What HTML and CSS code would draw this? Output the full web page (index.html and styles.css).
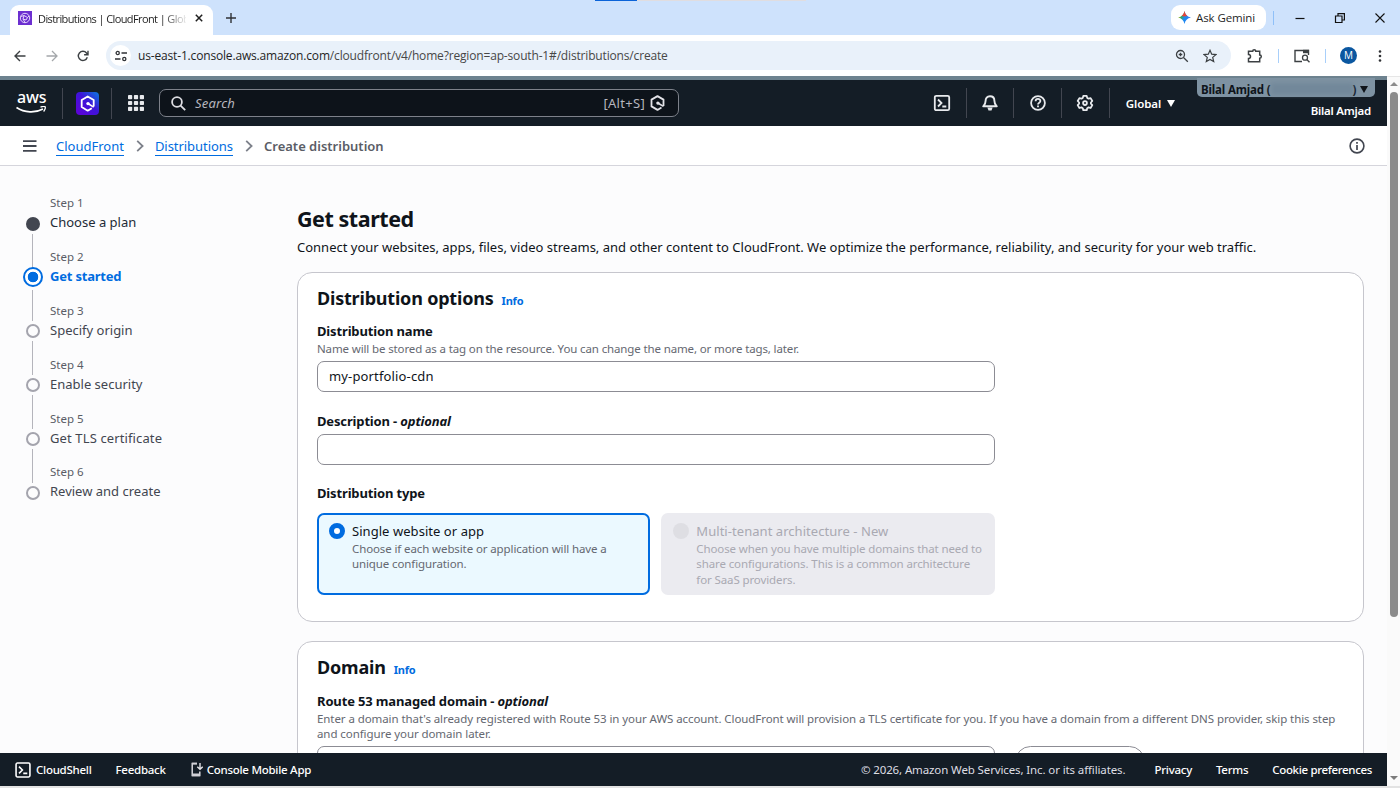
FILE: index.html
```html
<!DOCTYPE html>
<html lang="en">
<head>
    <meta charset="utf-8">
    <title>Distributions | CloudFront | Global</title>
    <link rel="stylesheet" href="styles.css">
</head>
<body>
    <!-- Browser tabs -->
    <div class="tab-strip">
        <div class="tab">
            <svg class="favicon" viewBox="0 0 14 14"><rect width="14" height="14" fill="#6c2fd0"/><g fill="none" stroke="#e3d3fb" stroke-width="1"><circle cx="7" cy="7" r="4.7"/><path d="M3 5.5l3-1 3.5 2L11 5M6 4.500L5 8l2 3.500M9.500 6.500L8 9l-3-1"/></g></svg>
            <span class="tab-title">Distributions | CloudFront | Glob</span>
            <svg class="tab-close" viewBox="0 0 10 10"><path d="M1.800 1.800l6.400 6.400M8.200 1.800L1.800 8.200" stroke="#1f1f1f" stroke-width="1.500"/></svg>
        </div>
        <svg class="tab-new" viewBox="0 0 12 12"><path d="M6 1v10M1 6h10" stroke="#303236" stroke-width="1.400"/></svg>
        <div class="loading-bar"><div class="loading-done"></div></div>
        <div class="gemini">
            <svg width="13" height="13" viewBox="0 0 14 14"><defs><linearGradient id="gem" x1="0" y1="0.300" x2="1" y2="0.700"><stop offset="0" stop-color="#fbbc04"/><stop offset="0.250" stop-color="#34a853"/><stop offset="0.500" stop-color="#1a8cf0"/><stop offset="1" stop-color="#3477f6"/></linearGradient></defs><path d="M7 0c.8 4 3 6.200 7 7-4 .8-6.200 3-7 7-.8-4-3-6.200-7-7 4-.8 6.200-3 7-7z" fill="url(#gem)"/><path d="M7 0c.5 2.500 1.500 4.200 3 5.400L7 6 4 5.400C5.500 4.200 6.500 2.500 7 0z" fill="#ea4335"/></svg>
            <span>Ask Gemini</span>
        </div>
        <div class="strip-divider"></div>
        <svg class="win-btn" viewBox="0 0 12 12"><path d="M1.500 6.500h9" stroke="#111" stroke-width="1.200"/></svg>
        <svg class="win-btn" viewBox="0 0 12 12"><path d="M1.500 4h6.500v6.500H1.500zM4 4V1.600h6.400V8H8" fill="none" stroke="#111" stroke-width="1.200"/></svg>
        <svg class="win-btn" viewBox="0 0 12 12"><path d="M1.500 1.500l9 9M10.500 1.500l-9 9" stroke="#111" stroke-width="1.100"/></svg>
    </div>

    <!-- Address bar -->
    <div class="toolbar">
        <svg class="tb-icon back" viewBox="0 0 12 12"><path d="M11.500 6H1.200M6 1L1 6l5 5" fill="none" stroke="#3c4043" stroke-width="1.400"/></svg>
        <svg class="tb-icon forward" viewBox="0 0 12 12"><path d="M.5 6h10.300M6 1l5 5-5 5" fill="none" stroke="#a4a7aa" stroke-width="1.300"/></svg>
        <svg class="tb-icon reload" viewBox="0 0 12 12"><path d="M10.300 7.300A4.600 4.600 0 1 1 9.500 3L11 4.600M11 .8v3.900H7.100" fill="none" stroke="#3c4043" stroke-width="1.400"/></svg>
        <div class="omnibox">
            <div class="site-info">
                <svg width="12" height="12" viewBox="0 0 12 12"><g fill="none" stroke="#303236" stroke-width="1.300"><circle cx="2.700" cy="3" r="1.600"/><path d="M6.500 3H12M0 9h5.500"/><circle cx="9.300" cy="9" r="1.600"/></g></svg>
            </div>
            <span class="url">us-east-1.console.aws.amazon.com<span class="url-path">/cloudfront/v4/home?region=ap-south-1#/distributions/create</span></span>
            <svg class="omni-icon zoom" viewBox="0 0 14 14"><g fill="none" stroke="#3c4043" stroke-width="1.300"><circle cx="5.500" cy="5.500" r="4"/><path d="M8.500 8.500l4.300 4.300M3.700 5.500h3.600M5.500 3.700v3.600"/></g></svg>
            <svg class="omni-icon" viewBox="0 0 14 14"><path d="M7 1.300l1.700 3.900 4.200.4-3.200 2.800 1 4.200L7 10.400l-3.700 2.200 1-4.200L1.100 5.600l4.200-.4z" fill="none" stroke="#3c4043" stroke-width="1.200"/></svg>
        </div>
        <svg class="extensions" viewBox="0 0 16 16"><path d="M1.500 3.200h4.200a1.500 1.500 0 0 1 3 0h4V7a1.600 1.600 0 0 1 0 3.200v3.600H1.500v-3.300a2 2 0 0 0 0-4z" fill="none" stroke="#3c4043" stroke-width="1.500"/></svg>
        <div class="tb-divider"></div>
        <svg class="reader" viewBox="0 0 16 14"><path d="M8 12.500H1V1.500h13.500V6" fill="none" stroke="#3c4043" stroke-width="1.400"/><path d="M9 .8h6v3.400H9z" fill="#3c4043"/><circle cx="11" cy="8.700" r="2.500" fill="none" stroke="#3c4043" stroke-width="1.300"/><path d="M12.800 10.500l2.700 2.700" stroke="#3c4043" stroke-width="1.400"/></svg>
        <div class="tb-divider"></div>
        <div class="avatar">M</div>
        <svg class="kebab" viewBox="0 0 4 14"><g fill="#303236"><circle cx="2" cy="2.500" r="1.300"/><circle cx="2" cy="7" r="1.300"/><circle cx="2" cy="11.500" r="1.300"/></g></svg>
    </div>

    <div class="viewport">
        <div class="page">
            <!-- Console navigation -->
            <header class="nav">
                <div class="aws-logo">
                    <span>aws</span>
                    <svg width="31" height="8" viewBox="0 0 31 8"><path d="M.5 1.500c8 5.500 19 5.600 26.500 1.500" fill="none" stroke="#fff" stroke-width="1.600"/><path d="M24.500 1.200c2-.9 4.300-.8 4.700-.3.400.6-.2 3-1.600 4.600" fill="none" stroke="#fff" stroke-width="1.300"/></svg>
                </div>
                <div class="nav-divider d1"></div>
                <svg class="q-logo" viewBox="0 0 23 23"><defs><linearGradient id="q" x1="0" y1="1" x2="1" y2="0"><stop offset="0" stop-color="#6200d8"/><stop offset="0.550" stop-color="#3d14d8"/><stop offset="1" stop-color="#0b7be0"/></linearGradient></defs><rect width="23" height="23" rx="4" fill="url(#q)"/><path d="M15.800 16.200l-4.100 2.500-6-3.600V8.100l6-3.600 6 3.600v6.400" fill="none" stroke="#fff" stroke-width="1.800" stroke-linejoin="round"/><path d="M11.900 11.500l5.800 3.600" stroke="#fff" stroke-width="1.600"/><circle cx="12" cy="11.600" r="1.700" fill="#fff"/></svg>
                <div class="nav-divider d2"></div>
                <svg class="apps" viewBox="0 0 16 16"><g fill="#e8eaed"><rect width="4.200" height="4.200" rx=".8"/><rect x="5.900" width="4.200" height="4.200" rx=".8"/><rect x="11.800" width="4.200" height="4.200" rx=".8"/><rect y="5.900" width="4.200" height="4.200" rx=".8"/><rect x="5.900" y="5.900" width="4.200" height="4.200" rx=".8"/><rect x="11.800" y="5.900" width="4.200" height="4.200" rx=".8"/><rect y="11.800" width="4.200" height="4.200" rx=".8"/><rect x="5.900" y="11.800" width="4.200" height="4.200" rx=".8"/><rect x="11.800" y="11.800" width="4.200" height="4.200" rx=".8"/></g></svg>
                <div class="search">
                    <svg width="15" height="15" viewBox="0 0 15 15"><g fill="none" stroke="#dedee3" stroke-width="1.800"><circle cx="6" cy="6" r="4.900"/><path d="M9.600 9.600l4.600 4.600"/></g></svg>
                    <span class="search-placeholder">Search</span>
                    <span class="search-key">[Alt+S]</span>
                    <svg width="15" height="16" viewBox="0 0 15 16"><path d="M11.500 12.500l-4 2.400-6-3.500V4.600l6-3.500 6 3.500v6.300" fill="none" stroke="#e3e3e8" stroke-width="1.800" stroke-linejoin="round"/><path d="M7.800 8l5.700 3.400" stroke="#e3e3e8" stroke-width="1.600"/><circle cx="7.900" cy="8.100" r="1.700" fill="#e3e3e8"/></svg>
                </div>
                <div class="nav-tools">
                    <div class="tool"><svg width="18" height="18" viewBox="0 0 18 18"><g fill="none" stroke="#e8eaed" stroke-width="1.800"><rect x="1.800" y="1.800" width="14.400" height="14.400" rx="1.500"/><path d="M5 5.500L8.500 9 5 12.500M9.300 12.500h4"/></g></svg></div>
                    <div class="tool"><svg width="18" height="18" viewBox="0 0 18 18"><path d="M9 2.300c-3 0-4.400 2-4.400 4.500 0 3-.9 3.700-2.400 5.500h13.600c-1.500-1.800-2.400-2.500-2.400-5.500 0-2.500-1.400-4.500-4.400-4.500z" fill="none" stroke="#e8eaed" stroke-width="1.900" stroke-linejoin="round"/><path d="M6.400 13.500h5.200L10.500 16.500h-3z" fill="#e8eaed"/></svg></div>
                    <div class="tool"><svg width="18" height="18" viewBox="0 0 18 18"><g fill="none" stroke="#e8eaed" stroke-width="1.800"><circle cx="9" cy="9" r="6.900"/><path d="M6.600 7.200c0-3 4.800-3 4.800-.2 0 1.800-2.400 1.600-2.400 3.500M9 11.600v1.700"/></g></svg></div>
                    <div class="tool"><svg width="18" height="18" viewBox="0 0 18 18"><g fill="none" stroke="#e8eaed" stroke-width="1.800" stroke-linejoin="round"><path d="M7.300 1.900h3.400l.5 2 1.400.8 2-.6 1.700 2.900L14.900 8.500v1.200l1.400 1.400-1.700 2.900-2-.6-1.400.8-.5 2H7.300l-.5-2-1.400-.8-2 .6-1.700-2.900 1.400-1.400V8.500L1.700 7l1.700-2.900 2 .6 1.400-.8z"/><circle cx="9" cy="9.100" r="1.900"/></g></svg></div>
                    <div class="region">Global<i class="caret"></i></div>
                </div>
                <div class="account">
                    <div class="account-badge">Bilal Amjad (<span class="redacted"></span>)<i class="caret"></i></div>
                    <div class="account-user">Bilal Amjad</div>
                </div>
            </header>

            <nav class="breadcrumbs">
                <svg class="menu" viewBox="0 0 14 14"><path d="M0 2.200h13.500M0 7h13.500M0 11.800h13.500" stroke="#424650" stroke-width="1.800"/></svg>
                <a class="crumb crumb-service">CloudFront</a>
                <svg class="chevron" viewBox="0 0 8 12"><path d="M1.200.8L6.600 6l-5.400 5.200" fill="none" stroke="#7d818a" stroke-width="1.800"/></svg>
                <a class="crumb crumb-list">Distributions</a>
                <svg class="chevron" viewBox="0 0 8 12"><path d="M1.200.8L6.600 6l-5.400 5.200" fill="none" stroke="#7d818a" stroke-width="1.800"/></svg>
                <span class="crumb-current">Create distribution</span>
                <svg class="info-icon" viewBox="0 0 16 16"><circle cx="8" cy="8" r="6.900" fill="none" stroke="#424650" stroke-width="1.600"/><path d="M8 4v1.700M8 7v5" stroke="#424650" stroke-width="1.700"/></svg>
            </nav>

            <div class="content">
                <ol class="steps">
                    <li class="step visited">
                        <div class="marker"><span class="dot"></span></div>
                        <div class="step-text"><small>Step 1</small><span>Choose a plan</span></div>
                    </li>
                    <li class="step active">
                        <div class="marker"><span class="dot"></span></div>
                        <div class="step-text"><small>Step 2</small><span>Get started</span></div>
                    </li>
                    <li class="step">
                        <div class="marker"><span class="dot"></span></div>
                        <div class="step-text"><small>Step 3</small><span>Specify origin</span></div>
                    </li>
                    <li class="step">
                        <div class="marker"><span class="dot"></span></div>
                        <div class="step-text"><small>Step 4</small><span>Enable security</span></div>
                    </li>
                    <li class="step">
                        <div class="marker"><span class="dot"></span></div>
                        <div class="step-text"><small>Step 5</small><span class="step-tls">Get TLS certificate</span></div>
                    </li>
                    <li class="step">
                        <div class="marker"><span class="dot"></span></div>
                        <div class="step-text"><small>Step 6</small><span>Review and create</span></div>
                    </li>
                </ol>

                <main class="main">
                    <h1>Get started</h1>
                    <p class="lead">Connect your websites, apps, files, video streams, and other content to CloudFront. We optimize the performance, reliability, and security for your web traffic.</p>

                    <section class="card">
                        <div class="card-header"><h2>Distribution options</h2><a class="info">Info</a></div>
                        <label class="label" for="name">Distribution name</label>
                        <p class="hint hint-name">Name will be stored as a tag on the resource. You can change the name, or more tags, later.</p>
                        <input class="input" type="text" id="name" value="my-portfolio-cdn">
                        <label class="label label-description" for="description">Description - <em>optional</em></label>
                        <input class="input input-description" type="text" id="description">
                        <div class="label label-type">Distribution type</div>
                        <div class="tiles">
                            <div class="tile selected">
                                <span class="radio"></span>
                                <div>
                                    <div class="tile-title">Single website or app</div>
                                    <p class="tile-text">Choose if each website or application will have a<br>unique configuration.</p>
                                </div>
                            </div>
                            <div class="tile disabled">
                                <span class="radio"></span>
                                <div>
                                    <div class="tile-title">Multi-tenant architecture - New</div>
                                    <p class="tile-text">Choose when you have multiple domains that need to<br>share configurations. This is a common architecture<br>for SaaS providers.</p>
                                </div>
                            </div>
                        </div>
                    </section>

                    <section class="card card-domain">
                        <div class="card-header"><h2>Domain</h2><a class="info">Info</a></div>
                        <label class="label label-route" for="domain">Route 53 managed domain - <em>optional</em></label>
                        <p class="hint">Enter a domain that's already registered with Route 53 in your AWS account. CloudFront will provision a TLS certificate for you. If you have a domain from a different DNS provider, skip this step<br>and configure your domain later.</p>
                        <div class="domain-row">
                            <input class="input" type="text" id="domain">
                            <button class="btn" type="button"></button>
                        </div>
                    </section>
                </main>
            </div>

            <footer class="footer">
                <svg width="16" height="16" viewBox="0 0 18 18"><g fill="none" stroke="#fff" stroke-width="1.800"><rect x="1.200" y="1.200" width="15.600" height="15.600" rx="1.500"/><path d="M4.500 5.200L8.300 9l-3.800 3.800M9.300 12.800h4.500"/></g></svg>
                <span class="f-shell">CloudShell</span>
                <span class="f-feedback">Feedback</span>
                <svg class="mobile" width="12" height="15" viewBox="0 0 12 15"><path d="M6 1.500H1.200v12h7.600V9.500" fill="none" stroke="#e3e3e8" stroke-width="1.400"/><path d="M1 11.500h8v2.800H1zM1 .8h5v1.600H1z" fill="#d0d0d6"/><path d="M9 1v6M6.300 4.700L9 7.300l2.700-2.600" fill="none" stroke="#e3e3e8" stroke-width="1.400"/></svg>
                <span class="f-mobile">Console Mobile App</span>
                <span class="f-copy">© 2026, Amazon Web Services, Inc. or its affiliates.</span>
                <span class="f-privacy">Privacy</span>
                <span class="f-terms">Terms</span>
                <span class="f-cookie">Cookie preferences</span>
            </footer>
        </div>
        <div class="scrollbar">
            <i class="arrow-up"></i>
            <div class="thumb"></div>
            <i class="arrow-down"></i>
        </div>
    </div>
    <div class="bottom-edge"></div>
</body>
</html>
```
FILE: styles.css
```css
* {
    box-sizing: border-box;
}

body {
    margin: 0;
    width: 1400px;
    height: 788px;
    overflow: hidden;
    display: flex;
    flex-direction: column;
    font-family: "Noto Sans", "Open Sans", sans-serif;
    font-size: 13px;
    color: #0f141a;
    background-color: #fff;
}

svg {
    display: block;
    flex: none;
}

h1, h2, p, ol {
    margin: 0;
    padding: 0;
}

/* Browser window */
.tab-strip {
    position: relative;
    flex: none;
    height: 35px;
    display: flex;
    align-items: center;
    background-color: #cee2fc;
    font-family: "Open Sans", sans-serif;
}

.tab {
    align-self: flex-end;
    display: flex;
    align-items: center;
    width: 203px;
    height: 30px;
    margin-left: 10px;
    padding: 0 8px 4px 8px;
    border-radius: 9px 9px 0 0;
    background-color: #fff;
}

.favicon {
    width: 14px;
    height: 14px;
}

.tab-title {
    width: 148px;
    margin-left: 6px;
    white-space: nowrap;
    font-size: 11px;
    letter-spacing: -0.6px;
    color: #1f1f1f;
    -webkit-mask-image: linear-gradient(to right, #000 125px, transparent 150px);
    mask-image: linear-gradient(to right, #000 125px, transparent 150px);
}

.tab-close {
    width: 10px;
    height: 10px;
    margin-left: 8px;
}

.tab-new {
    width: 12px;
    height: 12px;
    margin-left: 12px;
}

.loading-bar {
    position: absolute;
    top: 0;
    left: 595px;
    width: 211px;
    height: 1px;
    background-color: #e0dde0;
}

.loading-done {
    width: 42px;
    height: 1px;
    background-color: #0b63d8;
}

.gemini {
    display: flex;
    align-items: center;
    gap: 5px;
    width: 95px;
    height: 25px;
    margin-left: auto;
    padding-left: 7px;
    border-radius: 9px;
    background-color: #fff;
    font-size: 11.5px;
    font-weight: 500;
    letter-spacing: -0.1px;
    color: #1f1f1f;
}

.strip-divider {
    width: 1px;
    height: 14px;
    margin: 0 20px 0 7px;
    background-color: #8fc0f8;
}

.win-btn {
    width: 12px;
    height: 12px;
    margin-right: 28px;
}

.win-btn:last-child {
    margin-right: 14px;
}

.toolbar {
    flex: none;
    height: 41px;
    display: flex;
    align-items: center;
    background-color: #fff;
    font-family: "Open Sans", sans-serif;
}

.tb-icon {
    width: 12px;
    height: 12px;
}

.back {
    margin-left: 14px;
}

.forward {
    margin-left: 20px;
}

.reload {
    margin-left: 19px;
}

.omnibox {
    display: flex;
    align-items: center;
    width: 1125px;
    height: 29px;
    margin-left: 17px;
    padding: 0 14px 0 4px;
    border-radius: 15px;
    background-color: #e9f1fa;
}

.site-info {
    display: flex;
    align-items: center;
    justify-content: center;
    width: 21px;
    height: 21px;
    border-radius: 50%;
    background-color: #fff;
}

.url {
    margin-left: 7px;
    font-size: 12px;
    letter-spacing: -0.165px;
    color: #1f1f1f;
}

.url-path {
    color: #474747;
}

.omni-icon {
    width: 14px;
    height: 14px;
}

.zoom {
    margin-left: auto;
    margin-right: 14px;
}

.extensions {
    width: 16px;
    height: 16px;
    margin-left: 16px;
}

.tb-divider {
    width: 1px;
    height: 14px;
    margin: 0 15px 0 15px;
    background-color: #a8cffa;
}

.reader {
    width: 16px;
    height: 14px;
}

.avatar {
    width: 17px;
    height: 17px;
    margin-right: 21px;
    margin-left: -1px;
    border-radius: 50%;
    background-color: #0b57a0;
    color: #fff;
    font-size: 10px;
    line-height: 17px;
    text-align: center;
}

.kebab {
    width: 4px;
    height: 14px;
}

.viewport {
    flex: 1;
    min-height: 0;
    display: flex;
}

.page {
    width: 1387px;
    display: flex;
    flex-direction: column;
    background-color: #fcfcfd;
}

.scrollbar {
    width: 13px;
    display: flex;
    flex-direction: column;
    align-items: center;
    padding: 5px 0 6px;
    border-top: 1px solid #e6e6e6;
    background-color: #fafafa;
}

.arrow-up {
    border: 4px solid transparent;
    border-top: 0;
    border-bottom: 4px solid #8b8b8b;
}

.arrow-down {
    margin-top: auto;
    border: 4px solid transparent;
    border-bottom: 0;
    border-top: 4px solid #7b7b7b;
}

.thumb {
    width: 8px;
    height: 525px;
    margin-top: 6px;
    border-radius: 4px;
    background-color: #8b8b8b;
}

.bottom-edge {
    flex: none;
    height: 2px;
    background-color: #e3e3e3;
}

/* Console navigation */
.nav {
    position: relative;
    flex: none;
    height: 50px;
    display: flex;
    align-items: center;
    border-top: 4px solid #6d828f;
    background-color: #141d26;
}

.aws-logo {
    width: 32px;
    margin-left: 16px;
    font-size: 16px;
    font-weight: 500;
    line-height: 11px;
    letter-spacing: -0.1px;
    color: #fff;
}

.aws-logo span {
    display: block;
    height: 14px;
    padding-left: 1px;
}

.nav-divider {
    width: 1px;
    height: 31px;
    background-color: #424650;
}

.d1 {
    margin-left: 14px;
}

.q-logo {
    width: 23px;
    height: 23px;
    margin-left: 13px;
}

.d2 {
    margin-left: 12px;
}

.apps {
    width: 16px;
    height: 16px;
    margin-left: 16px;
}

.search {
    display: flex;
    align-items: center;
    width: 520px;
    height: 28px;
    margin-left: 15px;
    padding: 0 13px 0 11px;
    border: 1px solid #7d818a;
    border-radius: 7px;
    background-color: #0d131a;
}

.search-placeholder {
    margin-left: 9px;
    font-size: 13px;
    font-style: italic;
    letter-spacing: 0.2px;
    color: #b6b6be;
}

.search-key {
    margin-left: auto;
    margin-right: 5px;
    font-size: 13px;
    letter-spacing: 0.3px;
    color: #b6b6be;
}

.nav-tools {
    display: flex;
    align-items: center;
    margin-left: 240px;
}

.tool {
    display: flex;
    align-items: center;
    justify-content: center;
    width: 47.7px;
    height: 30px;
    border-right: 1px solid #424650;
}

.region {
    display: flex;
    align-items: center;
    gap: 6px;
    margin-left: 16px;
    font-size: 11.5px;
    font-weight: 600;
    letter-spacing: -0.1px;
    color: #fff;
}

.caret {
    border: 4px solid transparent;
    border-bottom: 0;
    border-top: 7px solid currentColor;
}

.account {
    position: absolute;
    top: -2px;
    right: 12px;
    width: 178px;
}

.account-badge {
    display: flex;
    align-items: center;
    height: 19px;
    padding: 3px 0 0 4px;
    border-radius: 0 0 5px 5px;
    background-color: #7e92a2;
    font-size: 11.5px;
    font-weight: 700;
    letter-spacing: -0.15px;
    color: #0f141a;
}

.account-badge .caret {
    margin-left: 4px;
}

.redacted {
    width: 82px;
    height: 12px;
    background-color: #72889a;
    filter: blur(2px);
}

.account-user {
    margin-top: 5px;
    padding-right: 4px;
    font-size: 11.5px;
    font-weight: 600;
    letter-spacing: -0.25px;
    line-height: 18px;
    text-align: right;
    color: #fff;
}

.breadcrumbs {
    flex: none;
    height: 40px;
    display: flex;
    align-items: center;
    padding: 0 22px 0 23px;
    border-bottom: 1px solid #d5d5dc;
    background-color: #fff;
}

.menu {
    width: 14px;
    height: 14px;
}

.crumb {
    padding-top: 2px;
    color: #006ce0;
    line-height: 17px;
    border-bottom: 1px solid #006ce0;
}

.crumb-service {
    margin-left: 19px;
}

.crumb-list {
    letter-spacing: -0.05px;
}

.chevron {
    width: 8px;
    height: 12px;
    margin: 0 11px 0 12px;
}

.crumb-current {
    font-weight: 600;
    color: #5a5d66;
}

.info-icon {
    width: 16px;
    height: 16px;
    margin-left: auto;
}

.content {
    flex: 1;
    min-height: 0;
    display: flex;
    overflow: hidden;
}

/* Wizard steps */
.steps {
    width: 275px;
    margin-left: 22px;
    padding-top: 28px;
    list-style: none;
}

.step {
    display: flex;
    height: 53.9px;
    color: #424650;
}

.marker {
    display: flex;
    flex-direction: column;
    align-items: center;
    width: 21px;
    height: 53.9px;
    margin-top: 19.7px;
}

.dot {
    flex: none;
    width: 14px;
    height: 14px;
    margin: 3px 0;
    border: 2px solid #a4a4ad;
    border-radius: 50%;
}

.marker::after {
    content: "";
    width: 1.5px;
    flex: 1;
    background-color: #b4b4bb;
}

.step:last-child .marker::after {
    display: none;
}

.visited .dot {
    border-color: #424650;
    background-color: #424650;
}

.active .dot {
    width: 20px;
    height: 20px;
    margin: -1px 0 3px;
    border-color: #006ce0;
    background: radial-gradient(circle, #006ce0 5px, #fff 5.6px);
}

.step-text {
    margin-left: 7px;
    white-space: nowrap;
}

.step-text small,
.step-text span {
    display: block;
}

.step-text small {
    font-size: 11.5px;
    line-height: 18px;
    color: #5a5d66;
}

.step-text span {
    font-size: 13px;
    line-height: 20px;
}

.step-text .step-tls {
    letter-spacing: 0.12px;
}

.visited .step-text span {
    color: #232b37;
}

.active .step-text span {
    font-weight: 700;
    letter-spacing: -0.2px;
    color: #006ce0;
}

/* Main form */
.main {
    width: 1067px;
    white-space: nowrap;
}

h1 {
    margin-top: 39px;
    font-size: 21.5px;
    font-weight: 700;
    line-height: 28px;
    letter-spacing: -0.45px;
}

.lead {
    margin-top: 4px;
    font-size: 13px;
    line-height: 20px;
}

.card {
    height: 350px;
    margin-top: 14.5px;
    padding: 14px 19px 0;
    border: 1px solid #c6c6cd;
    border-radius: 15px;
    background-color: #fff;
}

.card-domain {
    margin-top: 19.5px;
}

.card-header {
    display: flex;
    align-items: baseline;
    gap: 8px;
    height: 24.5px;
}

h2 {
    font-size: 18px;
    font-weight: 700;
    line-height: 23px;
    letter-spacing: -0.2px;
}

.info {
    font-size: 11px;
    font-weight: 700;
    letter-spacing: -0.2px;
    color: #006ce0;
}

.label {
    display: block;
    margin-top: 10px;
    font-weight: 700;
    font-size: 13px;
    line-height: 20px;
    letter-spacing: -0.15px;
}

.label-description {
    margin-top: 19px;
}

.label-type {
    margin-top: 18.5px;
}

.label-route {
    margin-top: 10px;
}

.hint {
    font-size: 11.5px;
    line-height: 15.5px;
    letter-spacing: -0.078px;
    color: #656871;
}

.hint-name {
    letter-spacing: -0.13px;
}

.input {
    display: block;
    width: 678px;
    height: 31px;
    margin-top: 4px;
    padding: 0 11px;
    border: 1px solid #8c8c94;
    border-radius: 7px;
    font-family: inherit;
    font-size: 13px;
    letter-spacing: 0.15px;
    color: #0f141a;
}

.input-description {
    margin-top: 3px;
}

.tiles {
    display: flex;
    gap: 11px;
    margin-top: 9.5px;
}

.tile {
    display: flex;
    width: 333.3px;
    height: 82px;
    padding: 8px 12px;
    border-radius: 7px;
}

.selected {
    padding: 6px 10px;
    border: 2px solid #006ce0;
    background-color: #ebf9ff;
}

.disabled {
    background-color: #ebebf0;
    color: #a9a9b2;
}

.radio {
    flex: none;
    width: 16px;
    height: 16px;
    margin: 2px 7px 0 0;
    border-radius: 50%;
    background-color: #dedee3;
}

.selected .radio {
    border: 5px solid #006ce0;
    background-color: #fff;
}

.tile-title {
    font-size: 13px;
    line-height: 20px;
    letter-spacing: 0.05px;
}

.tile-text {
    font-size: 11.5px;
    line-height: 15.5px;
    letter-spacing: -0.11px;
    color: #656871;
}

.disabled .tile-text {
    color: #a9a9b2;
}

.domain-row {
    display: flex;
    gap: 20px;
}

.btn {
    width: 130px;
    height: 31px;
    margin-top: 4px;
    border: 1.5px solid #8c8c94;
    border-radius: 16px;
    background-color: #fff;
}

/* Footer */
.footer {
    flex: none;
    height: 33px;
    display: flex;
    align-items: center;
    padding: 0 15px;
    background-color: #141d26;
    color: #fff;
    font-size: 11.5px;
    font-weight: 500;
    letter-spacing: -0.26px;
    white-space: nowrap;
}

.f-shell {
    margin-left: 5px;
}

.f-feedback {
    margin-left: 24px;
}

.mobile {
    margin-left: 25px;
}

.f-mobile {
    margin-left: 4px;
}

.f-copy {
    margin-left: auto;
    font-weight: 400;
    letter-spacing: -0.12px;
    color: #dedee3;
}

.f-privacy {
    margin-left: 29px;
}

.f-terms {
    margin-left: 24px;
}

.f-cookie {
    margin-left: 24px;
    letter-spacing: -0.34px;
}
```
